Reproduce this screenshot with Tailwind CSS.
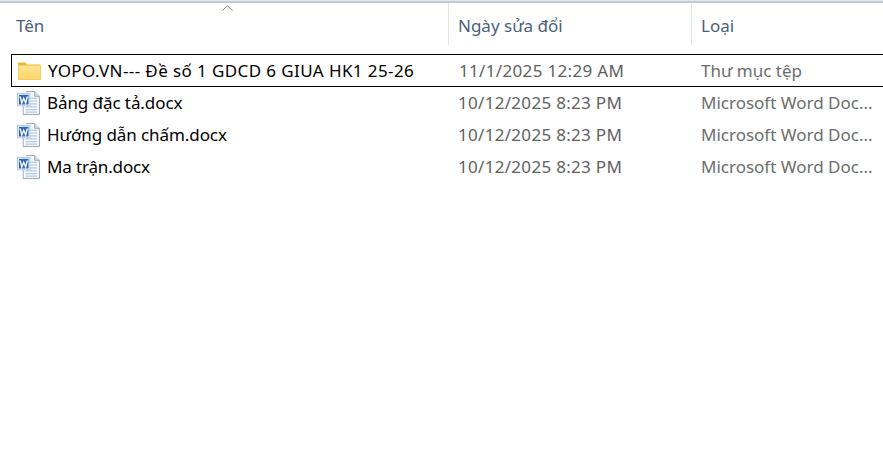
<!DOCTYPE html>
<html lang="en">
<head>
  <meta charset="UTF-8">
  <title>Explorer</title>
  <script src="https://cdn.jsdelivr.net/npm/@tailwindcss/browser@4"></script>
</head>
<body class="bg-white w-[883px] h-[456px] overflow-hidden font-['Noto_Sans','Open_Sans',sans-serif] text-[17px]">
  <svg width="0" height="0" class="absolute">
    <defs>
      <linearGradient id="folderBody" x1="0" y1="0" x2="0" y2="1">
        <stop offset="0" stop-color="#ffe594"/>
        <stop offset="1" stop-color="#fcd468"/>
      </linearGradient>
      <symbol id="word" viewBox="0 0 24 26">
        <path d="M9.500 0.500H18.500L23.500 5.500V24.500H6.500V10" fill="#f6f9fd" stroke="#93a6bf"/>
        <path d="M18.500 0.500V5.500H23.500" fill="#d5e0ee" stroke="#93a6bf"/>
        <path d="M14 7.500H21M14 10.500H21M14 13.500H21M9 16.500H21M9 19.500H21M9 22H21" stroke="#a3b8d3"/>
        <rect x="0.500" y="2.500" width="13" height="13" fill="#e6eef8" stroke="#b8c8dc"/>
        <rect x="2" y="4" width="10" height="10" fill="#2a67bd"/>
        <path d="M3.200 5.500L5 12.500L7 7.500L9 12.500L10.800 5.500" fill="none" stroke="#fff" stroke-width="1.400"/>
      </symbol>
    </defs>
  </svg>

  <div class="h-[3px] border-t border-[#e2e8ef] bg-[#bfcddb]"></div>

  <div class="relative flex h-[42px] text-[#4c607a]">
    <svg class="absolute left-[222px] top-[2px]" width="11" height="6" viewBox="0 0 11 6">
      <path d="M0.500 5.500L5.500 0.800L10.500 5.500" fill="none" stroke="#8a8a8a"/>
    </svg>
    <div class="w-[449px] pl-[16px] pt-[10px] border-r border-[#e5e5e5]">Tên</div>
    <div class="w-[243px] pl-[9px] pt-[10px] border-r border-[#e5e5e5]">Ngày sửa đổi</div>
    <div class="flex-1 pl-[9px] pt-[10px]">Loại</div>
  </div>

  <div class="mt-[9px] ml-[11px] flex flex-col">
    <div class="flex items-center h-[33px] border border-black border-r-0">
      <div class="w-[436px] flex items-center pl-[6px] gap-[7px] text-black">
        <svg width="23" height="18" viewBox="0 0 23 18">
          <path d="M0 1.500Q0 0.500 1 0.500H7.500L9 2.500H22.500V6H0Z" fill="#f1b32e"/>
          <path d="M0.500 3.500H22.500V17.500H0.500Z" fill="url(#folderBody)" stroke="#f3cd66"/>
        </svg>
        <span class="whitespace-nowrap tracking-[0.4px]">YOPO.VN--- Đề số 1 GDCD 6 GIUA HK1 25-26</span>
      </div>
      <div class="w-[243px] pl-[11px] text-[#5f5f5f] whitespace-nowrap tracking-[0.33px]">11/1/2025 12:29 AM</div>
      <div class="flex-1 pl-[10px] text-[#6d6d6d] whitespace-nowrap">Thư mục tệp</div>
    </div>

    <div class="flex items-center h-[32px]">
      <div class="w-[437px] flex items-center pl-[6px] gap-[7px] text-black">
        <svg width="23" height="25"><use href="#word"/></svg>
        <span class="whitespace-nowrap tracking-[-0.08px]">Bảng đặc tả.docx</span>
      </div>
      <div class="w-[243px] pl-[10px] text-[#5f5f5f] whitespace-nowrap tracking-[0.3px]">10/12/2025 8:23 PM</div>
      <div class="flex-1 pl-[10px] text-[#6d6d6d] whitespace-nowrap">Microsoft Word Doc...</div>
    </div>
    <div class="flex items-center h-[32px]">
      <div class="w-[437px] flex items-center pl-[6px] gap-[7px] text-black">
        <svg width="23" height="25"><use href="#word"/></svg>
        <span class="whitespace-nowrap tracking-[-0.08px]">Hướng dẫn chấm.docx</span>
      </div>
      <div class="w-[243px] pl-[10px] text-[#5f5f5f] whitespace-nowrap tracking-[0.3px]">10/12/2025 8:23 PM</div>
      <div class="flex-1 pl-[10px] text-[#6d6d6d] whitespace-nowrap">Microsoft Word Doc...</div>
    </div>
    <div class="flex items-center h-[32px]">
      <div class="w-[437px] flex items-center pl-[6px] gap-[7px] text-black">
        <svg width="23" height="25"><use href="#word"/></svg>
        <span class="whitespace-nowrap tracking-[-0.15px]">Ma trận.docx</span>
      </div>
      <div class="w-[243px] pl-[10px] text-[#5f5f5f] whitespace-nowrap tracking-[0.3px]">10/12/2025 8:23 PM</div>
      <div class="flex-1 pl-[10px] text-[#6d6d6d] whitespace-nowrap">Microsoft Word Doc...</div>
    </div>
  </div>
</body>
</html>
